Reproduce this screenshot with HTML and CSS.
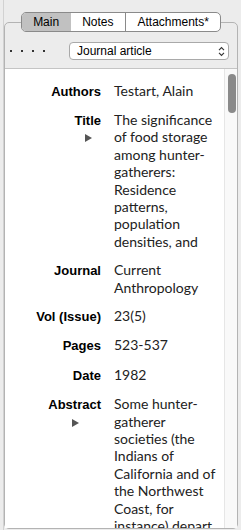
FILE: index.html
```html
<!DOCTYPE html>
<html lang="en">
<head>
    <meta charset="UTF-8">
    <meta name="viewport" content="width=device-width, initial-scale=1.0">
    <title>Item Pane</title>
    <link rel="stylesheet" href="styles.css">
</head>
<body>

    <div class="pane">
        <div class="tabbox">
            <div class="tabs">
                <span class="tab selected">Main</span>
                <span class="tab">Notes</span>
                <span class="tab">Attachments*</span>
            </div>

            <div class="type-row">
                <div class="dots"><i></i><i></i><i></i><i></i></div>
                <div class="select">
                    <span>Journal article</span>
                    <svg class="chevrons" width="7" height="11" viewBox="0 0 7 11">
                        <path d="M1 4.2 L3.5 1.6 L6 4.2 M1 6.8 L3.5 9.4 L6 6.8" fill="none" stroke="#333" stroke-width="1.1"/>
                    </svg>
                </div>
            </div>

            <div class="content">
                <div class="fields">
                    <div class="field">
                        <div class="label"><span class="label-text">Authors</span></div>
                        <div class="value">Testart, Alain</div>
                    </div>
                    <div class="field">
                        <div class="label"><span class="label-text">Title<span class="toggle"></span></span></div>
                        <div class="value">The significance of food storage among hunter-gatherers: Residence patterns, population densities, and</div>
                    </div>
                    <div class="field">
                        <div class="label"><span class="label-text">Journal</span></div>
                        <div class="value">Current Anthropology</div>
                    </div>
                    <div class="field">
                        <div class="label"><span class="label-text">Vol (Issue)</span></div>
                        <div class="value">23(5)</div>
                    </div>
                    <div class="field">
                        <div class="label"><span class="label-text">Pages</span></div>
                        <div class="value">523-537</div>
                    </div>
                    <div class="field">
                        <div class="label"><span class="label-text">Date</span></div>
                        <div class="value">1982</div>
                    </div>
                    <div class="field">
                        <div class="label"><span class="label-text">Abstract<span class="toggle"></span></span></div>
                        <div class="value">Some hunter-gatherer societies (the Indians of California and of the Northwest Coast, for instance) depart from the general pattern</div>
                    </div>
                </div>
                <div class="scrollbar"><div class="thumb"></div></div>
            </div>
        </div>
    </div>

</body>
</html>
```

FILE: styles.css
```css
html, body {
    margin: 0;
    padding: 0;
}
body {
    background-color: #ececec;
    font-family: "Liberation Sans", Arial, sans-serif;
    color: #000;
    overflow: hidden;
}
.pane {
    height: 530px;
    margin-left: 3px;
    border-left: 1px solid #d2d2d2;
    box-sizing: border-box;
    padding: 22px 3px 1px 0;
    display: flex;
    flex-direction: column;
}
.tabbox {
    flex: 1;
    min-height: 0;
    border: 1px solid #b3b3b3;
    border-radius: 5px;
    display: flex;
    flex-direction: column;
}

/* segmented tabs sitting on the box border */
.tabs {
    align-self: center;
    display: flex;
    margin-top: -11px;
    border: 1px solid #8a8a8a;
    border-radius: 5px;
    background-color: #fff;
    overflow: hidden;
}
.tab {
    padding: 0 11.5px;
    font-size: 12px;
    line-height: 18px;
}
.tab.selected {
    background-color: #c1c1c1;
}
.tab + .tab + .tab {
    border-left: 1px solid #8a8a8a;
}

.type-row {
    display: flex;
    align-items: center;
    height: 18px;
    margin: 10px 0 8px;
    padding: 0 8px 0 5px;
}
.dots {
    display: flex;
    gap: 9px;
}
.dots i {
    width: 2px;
    height: 2px;
    background-color: #333;
}
.select {
    margin-left: auto;
    width: 160px;
    height: 18px;
    box-sizing: border-box;
    border: 1px solid #a9a9a9;
    border-radius: 4px;
    background-color: #fff;
    display: flex;
    align-items: center;
    justify-content: space-between;
    padding: 0 3px 0 7px;
    font-size: 12px;
}
.chevrons {
    display: block;
}

.content {
    flex: 1;
    min-height: 0;
    display: flex;
    background-color: #fff;
    border-top: 1px solid #c4c4c4;
}
.fields {
    flex: 1;
    min-width: 0;
    overflow: hidden;
    padding-top: 7px;
}
.field {
    display: flex;
    align-items: baseline;
    padding: 5.5px 0;
}
.label {
    flex: none;
    width: 96px;
    text-align: right;
    font-weight: bold;
    font-size: 13px;
    line-height: 17.4px;
}
.label-text {
    display: inline-flex;
    flex-direction: column;
    align-items: center;
}
.toggle {
    width: 0;
    height: 0;
    margin: 5px 0 0 2px;
    border-left: 7px solid #555;
    border-top: 4px solid transparent;
    border-bottom: 4px solid transparent;
}
.value {
    flex: 1;
    margin-left: 13px;
    padding-right: 4px;
    font-family: Lato, "Open Sans", sans-serif;
    font-size: 14px;
    line-height: 17.4px;
    color: #222;
}

.scrollbar {
    flex: none;
    width: 12px;
    border-left: 1px solid #e6e6e6;
    background-color: #f9f9f9;
}
.thumb {
    width: 8px;
    height: 39px;
    margin: 5px 0 0 3px;
    border-radius: 4px;
    background-color: #8a8a8a;
}
```
